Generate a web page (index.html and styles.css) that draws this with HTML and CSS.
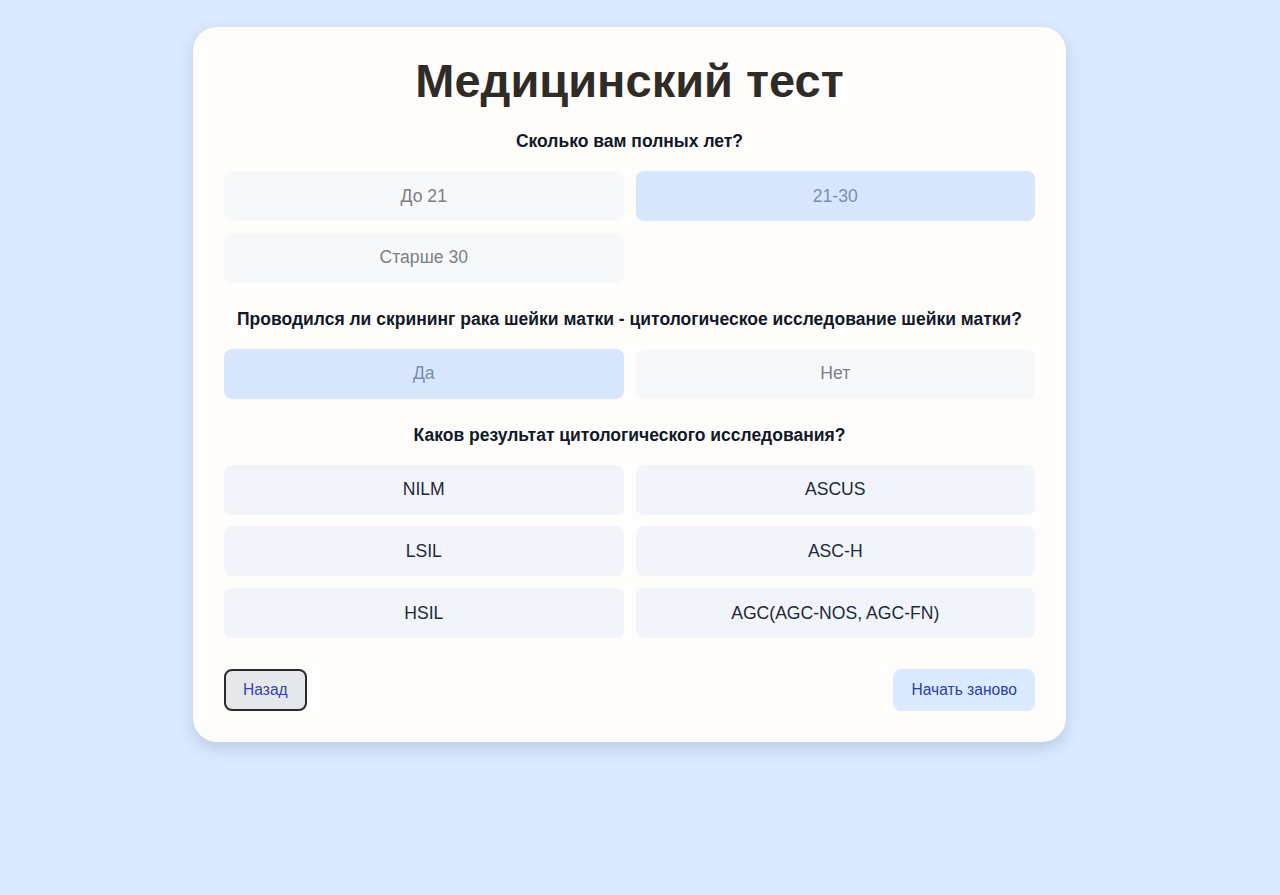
FILE: index.html
```html
<!DOCTYPE html>
<html lang="ru">
<head>
<meta charset="utf-8">
<title>Медицинский тест</title>
<link rel="stylesheet" href="styles.css">
</head>
<body>
<div class="page">
  <div class="card">
    <h1 class="title">Медицинский тест</h1>

    <div class="question">
      <div class="q-label">Сколько вам полных лет?</div>
      <div class="options">
        <button class="opt opt-done">До 21</button>
        <button class="opt opt-done opt-selected">21-30</button>
        <button class="opt opt-done">Старше 30</button>
      </div>
    </div>

    <div class="question">
      <div class="q-label">Проводился ли скрининг рака шейки матки - цитологическое исследование шейки матки?</div>
      <div class="options">
        <button class="opt opt-done opt-selected">Да</button>
        <button class="opt opt-done">Нет</button>
      </div>
    </div>

    <div class="question">
      <div class="q-label">Каков результат цитологического исследования?</div>
      <div class="options">
        <button class="opt">NILM</button>
        <button class="opt">ASCUS</button>
        <button class="opt">LSIL</button>
        <button class="opt">ASC-H</button>
        <button class="opt">HSIL</button>
        <button class="opt">AGC(AGC-NOS, AGC-FN)</button>
      </div>
    </div>

    <div class="actions">
      <button class="btn btn-back">Назад</button>
      <button class="btn btn-reset">Начать заново</button>
    </div>
  </div>
</div>
</body>
</html>
```

FILE: styles.css
```css
* { box-sizing: border-box; }

html, body {
  margin: 0;
  padding: 0;
}

body {
  background: #dbeafe;
  font-family: "Liberation Sans", Arial, sans-serif;
  min-height: 895px;
}

.page {
  padding: 27px 21px 0 0;
  display: flex;
  justify-content: center;
}

.card {
  width: 873px;
  background: #fffdfc;
  border-radius: 24px;
  padding: 24px 31px 31px 31px;
  box-shadow: 0 6px 16px rgba(60, 90, 140, 0.22);
}

.title {
  margin: 0 0 19px 0;
  text-align: center;
  font-size: 47px;
  line-height: 60px;
  font-weight: 700;
  color: #2f2b27;
}

.question {
  margin-bottom: 25px;
}

.q-label {
  text-align: center;
  font-size: 17.5px;
  font-weight: 700;
  color: #111827;
  line-height: 22px;
  margin-bottom: 19px;
}

.options {
  display: grid;
  grid-template-columns: 1fr 1fr;
  gap: 11.7px 12px;
}

.opt {
  height: 50px;
  border: none;
  border-radius: 8px;
  background: #f1f5f9;
  color: #1e293b;
  font-family: "Liberation Sans", Arial, sans-serif;
  font-size: 17.6px;
  cursor: pointer;
}

.opt-done {
  background: #f7f8fa;
  color: #7c7f86;
}

.opt-done.opt-selected {
  background: #d8e7fd;
  color: #7d8db0;
}

.actions {
  display: flex;
  justify-content: space-between;
  margin-top: 31px;
}

.btn {
  height: 42px;
  border-radius: 8px;
  font-family: "Liberation Sans", Arial, sans-serif;
  font-size: 15.6px;
  padding: 0 17px;
  cursor: pointer;
}

.btn-back {
  background: #e5e7eb;
  border: 2px solid #2b2b2b;
  color: #3445b4;
}

.btn-reset {
  background: #dbeafe;
  border: none;
  color: #2a3fa8;
  padding: 0 18px;
}
```
